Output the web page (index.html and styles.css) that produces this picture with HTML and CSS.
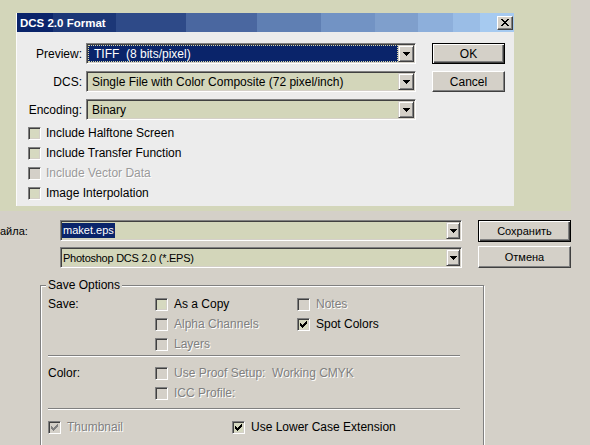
FILE: index.html
```html
<!DOCTYPE html>
<html>
<head>
<meta charset="utf-8">
<link rel="stylesheet" href="styles.css">
</head>
<body>
<div class="screen">
  <div class="stage">
    <div class="dlg">
      <div class="titlebar">
        <span class="title">DCS 2.0 Format</span>
        <span class="close"><svg width="8" height="7" viewBox="0 0 8 7"><path d="M0 0h2v1H0zM6 0h2v1H6zM1 1h2v1H1zM5 1h2v1H5zM2 2h4v1H2zM3 3h2v1H3zM2 4h4v1H2zM1 5h2v1H1zM5 5h2v1H5zM0 6h2v1H0zM6 6h2v1H6z" fill="#000"/></svg></span>
      </div>
      <div class="dlg-body">
        <div class="form-grid">
          <span class="lbl">Preview:</span>
          <div class="combo"><div class="combo-val focus">TIFF  (8 bits/pixel)</div><span class="arrow"><svg width="7" height="4" viewBox="0 0 7 4"><path d="M0 0h7v1H0zM1 1h5v1H1zM2 2h3v1H2zM3 3h1v1H3z" fill="#000"/></svg></span></div>
          <button class="btn def">OK</button>
          <span class="lbl">DCS:</span>
          <div class="combo"><div class="combo-val">Single File with Color Composite (72 pixel/inch)</div><span class="arrow"><svg width="7" height="4" viewBox="0 0 7 4"><path d="M0 0h7v1H0zM1 1h5v1H1zM2 2h3v1H2zM3 3h1v1H3z" fill="#000"/></svg></span></div>
          <button class="btn">Cancel</button>
          <span class="lbl">Encoding:</span>
          <div class="combo"><div class="combo-val">Binary</div><span class="arrow"><svg width="7" height="4" viewBox="0 0 7 4"><path d="M0 0h7v1H0zM1 1h5v1H1zM2 2h3v1H2zM3 3h1v1H3z" fill="#000"/></svg></span></div>
        </div>
        <div class="checks">
          <div class="chk-row"><span class="cb"></span><span>Include Halftone Screen</span></div>
          <div class="chk-row"><span class="cb"></span><span>Include Transfer Function</span></div>
          <div class="chk-row"><span class="cb cb-dis"></span><span class="dis-up">Include Vector Data</span></div>
          <div class="chk-row"><span class="cb"></span><span>Image Interpolation</span></div>
        </div>
      </div>
    </div>
  </div>

  <div class="lower">
    <div class="file-grid">
      <span class="file-lbl">айла:</span>
      <div class="combo combo-sm row1"><div class="combo-val sm-val"><span class="hl">maket.eps</span></div><span class="arrow arrow-sm"><svg width="7" height="4" viewBox="0 0 7 4"><path d="M0 0h7v1H0zM1 1h5v1H1zM2 2h3v1H2zM3 3h1v1H3z" fill="#000"/></svg></span></div>
      <button class="btn btn-sm def">Сохранить</button>
      <span></span>
      <div class="combo combo-sm row2"><div class="combo-val sm-val pad1 narrow">Photoshop DCS 2.0 (*.EPS)</div><span class="arrow arrow-sm"><svg width="7" height="4" viewBox="0 0 7 4"><path d="M0 0h7v1H0zM1 1h5v1H1zM2 2h3v1H2zM3 3h1v1H3z" fill="#000"/></svg></span></div>
      <button class="btn btn-sm">Отмена</button>
    </div>

    <fieldset class="group">
      <legend>Save Options</legend>
      <div class="sec sec-save">
        <span class="sec-lbl">Save:</span>
        <div class="chk"><span class="cb"></span><span>As a Copy</span></div>
        <div class="chk"><span class="cb cb-dis"></span><span class="dis">Notes</span></div>
        <span></span>
        <div class="chk"><span class="cb cb-dis"></span><span class="dis">Alpha Channels</span></div>
        <div class="chk"><span class="cb"><svg width="7" height="7" viewBox="0 0 7 7"><path d="M0 2h1v3H0zM1 3h1v3H1zM2 4h1v3H2zM3 3h1v3H3zM4 2h1v3H4zM5 1h1v3H5zM6 0h1v3H6z" fill="#000"/></svg></span><span>Spot Colors</span></div>
        <span></span>
        <div class="chk"><span class="cb cb-dis"></span><span class="dis">Layers</span></div>
      </div>
      <div class="sep"></div>
      <div class="sec sec-color">
        <span class="sec-lbl">Color:</span>
        <div class="chk span2"><span class="cb cb-dis"></span><span class="dis pre">Use Proof Setup:  Working CMYK</span></div>
        <span></span>
        <div class="chk"><span class="cb cb-dis"></span><span class="dis">ICC Profile:</span></div>
      </div>
      <div class="sep sep2"></div>
      <div class="sec sec-thumb">
        <div class="chk"><span class="cb cb-dis"><svg width="7" height="7" viewBox="0 0 7 7"><path d="M0 2h1v3H0zM1 3h1v3H1zM2 4h1v3H2zM3 3h1v3H3zM4 2h1v3H4zM5 1h1v3H5zM6 0h1v3H6z" fill="#808080"/></svg></span><span class="dis">Thumbnail</span></div>
        <div class="chk"><span class="cb"><svg width="7" height="7" viewBox="0 0 7 7"><path d="M0 2h1v3H0zM1 3h1v3H1zM2 4h1v3H2zM3 3h1v3H3zM4 2h1v3H4zM5 1h1v3H5zM6 0h1v3H6z" fill="#000"/></svg></span><span>Use Lower Case Extension</span></div>
      </div>
    </fieldset>
  </div>
</div>
</body>
</html>
```

FILE: styles.css
```css
body {
  margin: 0;
  background: #d4d0c8;
  font-family: "Liberation Sans", Arial, sans-serif;
  color: #000;
}

.screen {
  width: 590px;
  height: 445px;
  overflow: hidden;
  background: #d4d0c8;
}

.stage {
  width: 571px;
  height: 211px;
  box-sizing: border-box;
  padding: 13px 0 0 16px;
  background: #d3d6ba;
}

.dlg {
  width: 498px;
  height: 193px;
  box-sizing: border-box;
  background: #ececec;
  border-left: 1px solid #fbfbfb;
}

.titlebar {
  height: 19px;
  display: flex;
  align-items: center;
  justify-content: space-between;
  padding: 0 1px 0 3px;
  background: linear-gradient(to right,
    #0a246a 0 36px,
    #1c3777 36px 99px,
    #2e4a88 99px 169px,
    #4a67a0 169px 240px,
    #5f7fb3 240px 304px,
    #7293c4 304px 358px,
    #7f9fcc 358px 401px,
    #8dafdb 401px 436px,
    #9abde6 436px 463px,
    #a6caf0 463px);
}

.title {
  color: #fff;
  font-weight: bold;
  font-size: 11.5px;
}

.close {
  width: 16px;
  height: 14px;
  box-sizing: border-box;
  background: #d4d0c8;
  border: 1px solid;
  border-color: #fff #404040 #404040 #fff;
  box-shadow: inset -1px -1px #808080;
  display: flex;
  align-items: center;
  justify-content: center;
}

.dlg-body {
  padding: 11px 0 0 11px;
}

.form-grid {
  display: grid;
  grid-template-columns: 54px 330px 85px;
  grid-auto-rows: 21px;
  column-gap: 4px;
  row-gap: 7px;
}

.lbl {
  display: flex;
  align-items: center;
  justify-content: flex-end;
  font-size: 12px;
  white-space: nowrap;
}

.combo {
  display: flex;
  box-sizing: border-box;
  padding: 1px;
  border: 1px solid;
  border-color: #808080 #fff #fff #808080;
  box-shadow: inset 1px 1px #404040, inset -1px -1px #d4d0c8;
  background: #d3d6ba;
}

.combo-val {
  flex: 1;
  display: flex;
  align-items: center;
  padding-left: 4px;
  font-size: 12px;
  white-space: pre;
  overflow: hidden;
}

.focus {
  background: #0a246a;
  color: #fff;
  outline: 1px dotted #d8d8a8;
  outline-offset: -1px;
  padding-left: 6px;
}

.arrow {
  width: 16px;
  flex: none;
  box-sizing: border-box;
  background: #d4d0c8;
  border: 1px solid;
  border-color: #d4d0c8 #404040 #404040 #d4d0c8;
  box-shadow: inset 1px 1px #fff, inset -1px -1px #808080;
  display: flex;
  align-items: center;
  justify-content: center;
}

.btn {
  width: 73px;
  justify-self: end;
  margin: 0;
  padding: 0;
  font-family: "Liberation Sans", Arial, sans-serif;
  font-size: 12px;
  color: #000;
  background: #d4d0c8;
  border: 1px solid;
  border-color: #fff #404040 #404040 #fff;
  box-shadow: inset -1px -1px #808080;
}

.btn.def {
  border-color: #000;
  box-shadow: inset 1px 1px #fff, inset -1px -1px #404040, inset -2px -2px #808080;
}

.checks {
  margin-top: 3px;
}

.chk-row {
  height: 20px;
  display: flex;
  align-items: center;
  gap: 5px;
  font-size: 12px;
}

.cb {
  width: 13px;
  height: 13px;
  flex: none;
  box-sizing: border-box;
  border: 1px solid;
  border-color: #808080 #fff #fff #808080;
  box-shadow: inset 1px 1px #404040, inset -1px -1px #d4d0c8;
  background: #d6d9c0;
  display: flex;
  align-items: center;
  justify-content: center;
}

.cb-dis {
  background: #d4d0c8;
}

.dis-up {
  color: #9a9a9a;
  text-shadow: 1px 1px 0 #fff;
}

.dis {
  color: #808080;
  text-shadow: 1px 1px 0 #fff;
}

.pre {
  white-space: pre;
}

/* lower save dialog */
.file-grid {
  display: grid;
  grid-template-columns: 60px 402px 109px;
  grid-auto-rows: 22px;
  row-gap: 4px;
  padding-top: 9px;
}

.file-lbl {
  display: flex;
  align-items: center;
  font-size: 11px;
  white-space: nowrap;
}

.combo-sm {
  height: 21px;
}

.row1 {
  align-self: start;
}

.row2 {
  align-self: end;
}

.sm-val {
  font-size: 11px;
  padding-left: 0;
}

.narrow {
  letter-spacing: -0.25px;
}

.pad1 {
  padding-left: 1px;
}

.hl {
  background: #0a246a;
  color: #fff;
  padding: 1px 1px 2px;
}

.arrow-sm {
  width: 14px;
}

.btn-sm {
  width: 93px;
  font-size: 11px;
}

.group {
  margin: 10px 0 0 40px;
  width: 444px;
  height: 200px;
  box-sizing: border-box;
  padding: 0 0 0 7px;
  border: 1px solid #808080;
  box-shadow: inset 1px 1px #fff, 1px 1px #fff;
  min-inline-size: 0;
}

.group legend {
  padding: 0 2px;
  margin-left: -2px;
  font-size: 12px;
  line-height: 14px;
  background: #d4d0c8;
}

.sec {
  display: grid;
  grid-auto-rows: 20px;
  font-size: 12px;
}

.sec-save {
  grid-template-columns: 107px 142px auto;
  padding-top: 2px;
}

.sec-color {
  grid-template-columns: 107px 142px auto;
  margin-top: 6px;
}

.sec-thumb {
  grid-template-columns: 184px auto;
  margin-top: 7px;
}

.sec-lbl {
  display: flex;
  align-items: center;
}

.chk {
  display: flex;
  align-items: center;
  gap: 6px;
  white-space: nowrap;
}

.span2 {
  grid-column: span 2;
}

.sep {
  width: 412px;
  height: 1px;
  background: #808080;
  border-bottom: 1px solid #fff;
  margin-top: 1px;
}

.sep2 {
  margin-top: 5px;
}
```
